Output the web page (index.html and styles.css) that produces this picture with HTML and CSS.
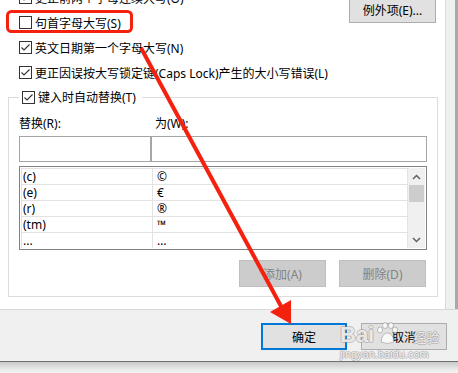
FILE: index.html
```html
<!DOCTYPE html>
<html lang="zh-CN">
<head>
    <meta charset="UTF-8">
    <title>自动更正</title>
    <link rel="stylesheet" href="styles.css">
</head>
<body>
<div class="window">
    <div class="main">
        <div class="content">
            <div class="top">
                <div class="options">
                    <div class="check"><span class="box"><svg width="11" height="11" viewBox="0 0 11 11"><path d="M1.5 5.5 L4 8 L9.5 2.5" fill="none" stroke="#333" stroke-width="1.1"/></svg></span>更正前两个字母连续大写(O)</div>
                    <div class="check"><span class="box"></span>句首字母大写(S)</div>
                    <div class="check"><span class="box"><svg width="11" height="11" viewBox="0 0 11 11"><path d="M1.5 5.5 L4 8 L9.5 2.5" fill="none" stroke="#333" stroke-width="1.1"/></svg></span>英文日期第一个字母大写(N)</div>
                    <div class="check"><span class="box"><svg width="11" height="11" viewBox="0 0 11 11"><path d="M1.5 5.5 L4 8 L9.5 2.5" fill="none" stroke="#333" stroke-width="1.1"/></svg></span>更正因误按大写锁定键(Caps Lock)产生的大小写错误(L)</div>
                </div>
                <button class="btn exceptions">例外项(E)...</button>
            </div>

            <fieldset class="group">
                <legend class="check"><span class="box"><svg width="11" height="11" viewBox="0 0 11 11"><path d="M1.5 5.5 L4 8 L9.5 2.5" fill="none" stroke="#333" stroke-width="1.1"/></svg></span>键入时自动替换(T)</legend>
                <div class="fields">
                    <span class="field-label">替换(R):</span>
                    <span class="field-label col2">为(W):</span>
                    <div class="input"></div>
                    <div class="input"></div>
                </div>
                <div class="list">
                    <div class="rows">
                        <div class="row"><span>(c)</span><span>©</span></div>
                        <div class="row"><span>(e)</span><span>€</span></div>
                        <div class="row"><span>(r)</span><span>®</span></div>
                        <div class="row"><span>(tm)</span><span>™</span></div>
                        <div class="row"><span>...</span><span>…</span></div>
                    </div>
                    <div class="scrollbar">
                        <div class="arrow"><svg width="9" height="6" viewBox="0 0 9 6"><path d="M1 5 L4.5 1.5 L8 5" fill="none" stroke="#606060" stroke-width="1.5"/></svg></div>
                        <div class="thumb"></div>
                        <div class="track"></div>
                        <div class="arrow"><svg width="9" height="6" viewBox="0 0 9 6"><path d="M1 1 L4.5 4.5 L8 1" fill="none" stroke="#606060" stroke-width="1.5"/></svg></div>
                    </div>
                </div>
                <div class="actions">
                    <button class="btn" disabled>添加(A)</button>
                    <button class="btn" disabled>删除(D)</button>
                </div>
            </fieldset>
        </div>
        <div class="side"></div>
    </div>

    <div class="footer">
        <button class="btn primary">确定</button>
        <button class="btn">取消</button>
    </div>
    <div class="shadow"></div>

    <!-- annotation drawn over the dialog -->
    <svg class="annotations" width="458" height="373" viewBox="0 0 458 373">
        <rect x="7.5" y="11.5" width="124" height="20" rx="4" fill="none" stroke="#f5210f" stroke-width="3"/>
        <line x1="141" y1="48" x2="282" y2="308" stroke="#f5210f" stroke-width="4"/>
        <polygon points="270,312 291,300 291,324" fill="#f5210f"/>
    </svg>

    <div class="watermark">
        <div class="logo">
            <span class="bai">Bai</span>
            <svg class="paw" width="24" height="24" viewBox="0 0 24 24">
                <g fill="rgba(255,255,255,0.8)" stroke="rgba(120,120,120,0.45)" stroke-width="1">
                    <ellipse cx="5" cy="8" rx="2.5" ry="3"/>
                    <ellipse cx="10" cy="3.5" rx="2.5" ry="3"/>
                    <ellipse cx="16" cy="3.5" rx="2.5" ry="3"/>
                    <ellipse cx="20" cy="8" rx="2.5" ry="3"/>
                    <path d="M6 20 Q7 11 12.5 11 Q18 11 19 20 Q12.5 23 6 20 Z"/>
                </g>
            </svg>
            <span class="jy">经验</span>
        </div>
        <div class="url">jingyan.baidu.com</div>
    </div>
</div>
</body>
</html>
```

FILE: styles.css
```css
* {
    box-sizing: border-box;
}
body {
    margin: 0;
    background: #f0f0f0;
    font-family: "Noto Sans", "Noto Sans CJK SC", sans-serif;
    font-size: 12px;
    color: #000;
}
.window {
    position: relative;
    width: 458px;
    height: 373px;
    overflow: hidden;
    display: flex;
    flex-direction: column;
}
.main {
    display: flex;
    height: 309px;
    background: #fff;
}
.content {
    width: 445px;
    overflow: hidden;
}
.side {
    flex: 1;
    background: #f0f0f0;
    border-left: 1px solid #dadada;
    border-right: 3px solid #a9a9a9;
}

/* checkbox rows */
.top {
    display: flex;
    justify-content: space-between;
    align-items: flex-start;
    margin-top: -15px;
    padding: 0 9px 0 19px;
}
.options {
    display: flex;
    flex-direction: column;
}
.check {
    display: flex;
    align-items: center;
    height: 25px;
    white-space: nowrap;
}
.box {
    width: 13px;
    height: 13px;
    border: 1px solid #333;
    background: #fff;
    margin-right: 3px;
    display: flex;
}
.btn {
    font: inherit;
    height: 27px;
    padding: 0;
    background: #e1e1e1;
    border: 1px solid #adadad;
    color: #000;
}
.exceptions {
    width: 87px;
    margin-top: 11px;
}

/* replace group */
.group {
    margin: 3px 0 0 8px;
    width: 430px;
    border: 1px solid #dcdcdc;
    padding: 9px 10px 9px 10px;
}
.group legend {
    padding: 0 6px 0 3px;
    height: 18px;
}
.fields {
    display: grid;
    grid-template-columns: 132px 1fr;
}
.field-label {
    height: 18px;
    line-height: 18px;
    margin-bottom: 3px;
}
.field-label.col2 {
    padding-left: 4px;
}
.input {
    height: 26px;
    border: 1px solid #a5a5a5;
    background: #fff;
}
.list {
    display: flex;
    margin-top: 4px;
    height: 84px;
    border: 1px solid #828282;
    padding: 1px;
}
.rows {
    flex: 1;
    overflow: hidden;
    border-left: 1px solid #e3e3e3;
    border-right: 1px solid #e3e3e3;
}
.row {
    display: flex;
    height: 16px;
    line-height: 15px;
    border-top: 1px solid #e3e3e3;
}
.row span:first-child {
    width: 131px;
    padding-left: 1px;
    border-right: 1px solid #e3e3e3;
}
.row span:last-child {
    padding-left: 4px;
}
.scrollbar {
    width: 17px;
    background: #f0f0f0;
    display: flex;
    flex-direction: column;
}
.arrow {
    height: 17px;
    display: flex;
    align-items: center;
    justify-content: center;
}
.thumb {
    height: 17px;
    margin: 0 1px;
    background: #cdcdcd;
}
.track {
    flex: 1;
}
.actions {
    display: flex;
    justify-content: flex-end;
    gap: 13px;
    margin-top: 10px;
    padding-right: 1px;
}
.actions .btn {
    width: 87px;
    background: #cccccc;
    border-color: #bfbfbf;
    color: #838383;
}

/* footer */
.footer {
    height: 53px;
    display: flex;
    justify-content: flex-end;
    gap: 14px;
    padding: 13px 11px 0 0;
    background: #f0f0f0;
    border-top: 1px solid #d8d8d8;
    border-bottom: 1px solid #6e6e6e;
}
.footer .btn {
    width: 86px;
}
.footer .primary {
    border: 2px solid #0078d7;
}
.shadow {
    flex: 1;
    background: linear-gradient(#c9c9c9, #f0f0f0 80%);
}

/* overlays */
.annotations {
    position: absolute;
    top: 0;
    left: 0;
    pointer-events: none;
}
.watermark {
    position: absolute;
    left: 340px;
    top: 316px;
    pointer-events: none;
    color: rgba(255, 255, 255, 0.8);
    text-shadow: 1px 0 0 rgba(140, 140, 140, 0.45), -1px 0 0 rgba(140, 140, 140, 0.45),
        0 1px 0 rgba(140, 140, 140, 0.45), 0 -1px 0 rgba(140, 140, 140, 0.45);
}
.logo {
    display: flex;
    align-items: flex-end;
    height: 30px;
}
.bai {
    font-family: "Liberation Sans", sans-serif;
    font-weight: bold;
    font-size: 22px;
    line-height: 22px;
}
.paw {
    margin: 0 2px 0 1px;
}
.jy {
    font-size: 13px;
    margin-left: 12px;
    line-height: 18px;
}
.url {
    font-family: "Liberation Sans", sans-serif;
    font-size: 11px;
    margin-top: 2px;
}
```
